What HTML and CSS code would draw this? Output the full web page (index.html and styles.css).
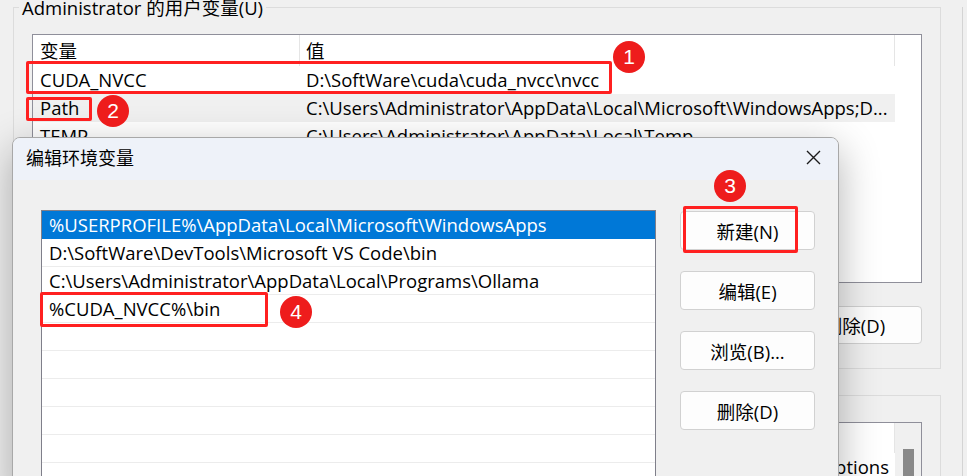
FILE: index.html
```html
<!DOCTYPE html>
<html lang="zh-CN">
<head>
    <meta charset="UTF-8">
    <title>环境变量</title>
    <link rel="stylesheet" href="styles.css">
</head>
<body>
    <div class="screen">
        <!-- background window: 环境变量 -->
        <div class="window">
            <div class="group">
                <div class="group-title">Administrator 的用户变量(U)</div>
                <div class="listview">
                    <div class="lv-header">
                        <div class="col col-name">变量</div>
                        <div class="col col-value">值</div>
                    </div>
                    <div class="lv-row">
                        <div class="col col-name">CUDA_NVCC</div>
                        <div class="col col-value">D:\SoftWare\cuda\cuda_nvcc\nvcc</div>
                    </div>
                    <div class="lv-row is-selected">
                        <div class="col col-name">Path</div>
                        <div class="col col-value">C:\Users\Administrator\AppData\Local\Microsoft\WindowsApps;D...</div>
                    </div>
                    <div class="lv-row">
                        <div class="col col-name">TEMP</div>
                        <div class="col col-value">C:\Users\Administrator\AppData\Local\Temp</div>
                    </div>
                    <div class="lv-row">
                        <div class="col col-name">TMP</div>
                        <div class="col col-value">C:\Users\Administrator\AppData\Local\Temp</div>
                    </div>
                </div>
                <div class="group-buttons">
                    <button class="btn">新建(N)...</button>
                    <button class="btn">编辑(E)...</button>
                    <button class="btn">删除(D)</button>
                </div>
            </div>

            <div class="group group-system">
                <div class="group-title">系统变量(S)</div>
                <div class="listview has-scroll">
                    <div class="lv-main">
                        <div class="lv-header">
                            <div class="col col-name">变量</div>
                            <div class="col col-value">值</div>
                        </div>
                        <div class="lv-row">
                            <div class="col col-name">JAVA_TOOL</div>
                            <div class="col col-value align-end">-Dfile.encoding=UTF-8 Options</div>
                        </div>
                    </div>
                    <div class="lv-scroll">
                        <div class="lv-thumb"></div>
                    </div>
                </div>
            </div>
        </div>

        <!-- dialog: 编辑环境变量 -->
        <div class="dialog">
            <div class="dialog-titlebar">
                <span class="dialog-title">编辑环境变量</span>
                <svg class="dialog-close" width="15" height="15" viewBox="0 0 15 15">
                    <path d="M1 1 L14 14 M14 1 L1 14" stroke="#1b1b1b" stroke-width="1.4" fill="none"/>
                </svg>
            </div>
            <div class="dialog-body">
                <div class="dialog-list">
                    <div class="dialog-row is-selected">%USERPROFILE%\AppData\Local\Microsoft\WindowsApps</div>
                    <div class="dialog-row">D:\SoftWare\DevTools\Microsoft VS Code\bin</div>
                    <div class="dialog-row">C:\Users\Administrator\AppData\Local\Programs\Ollama</div>
                    <div class="dialog-row">%CUDA_NVCC%\bin</div>
                    <div class="dialog-row"></div>
                    <div class="dialog-row"></div>
                    <div class="dialog-row"></div>
                    <div class="dialog-row"></div>
                    <div class="dialog-row"></div>
                    <div class="dialog-row"></div>
                </div>
                <div class="dialog-buttons">
                    <button class="btn">新建(N)</button>
                    <button class="btn">编辑(E)</button>
                    <button class="btn">浏览(B)...</button>
                    <button class="btn">删除(D)</button>
                </div>
            </div>
        </div>

        <!-- annotations -->
        <div class="mark mark-1"></div>
        <div class="mark mark-2"></div>
        <div class="mark mark-3"></div>
        <div class="mark mark-4"></div>
        <div class="badge badge-1">1</div>
        <div class="badge badge-2">2</div>
        <div class="badge badge-3">3</div>
        <div class="badge badge-4">4</div>
    </div>
</body>
</html>
```

FILE: styles.css
```css
/* Base */
* {
    box-sizing: border-box;
}

body {
    margin: 0;
    background-color: #f0f0f0;
    font-family: "Open Sans", "Noto Sans CJK SC", sans-serif;
    font-size: 18.5px;
    color: #000;
    overflow: hidden;
}

.screen {
    position: relative;
    width: 967px;
    height: 476px;
    overflow: hidden;
}

/* Background window */
.window {
    width: 963px;
    height: 476px;
    border-right: 1px solid #d4d4d4;
}

.group {
    margin: 7px 21px 0 13px;
    border: 1px solid #dcdcdc;
    padding: 0 18px 24px 18px;
}

.group-system {
    margin-top: 26px;
}

.group-title {
    width: fit-content;
    margin: -10px 0 0 -13px;
    padding: 0 3px;
    background-color: #f0f0f0;
    line-height: 20px;
    white-space: nowrap;
}

.listview {
    margin-top: 16px;
    height: 249px;
    background-color: #fff;
    border: 1px solid #8f8f9a;
    overflow: hidden;
}

.lv-header {
    display: flex;
    height: 31px;
    line-height: 31px;
}

.lv-header .col {
    border-right: 1px solid #e5e5e5;
}

.lv-row {
    display: flex;
    width: fit-content;
    height: 28px;
    line-height: 28px;
}

.lv-row.is-selected {
    background-color: #f0f0f0;
}

.col {
    white-space: nowrap;
    overflow: hidden;
}

.col-name {
    width: 267px;
    padding-left: 7px;
}

.col-value {
    width: 595px;
    padding-left: 6px;
}

.col-value.align-end {
    text-align: right;
    padding-right: 6px;
}

.listview.has-scroll {
    display: flex;
    height: 200px;
}

.lv-main {
    flex: 1;
}

.has-scroll .lv-header {
    height: 30px;
    line-height: 30px;
}

.lv-scroll {
    width: 27px;
    background-color: #f0f0f0;
    padding: 26px 0 0 8px;
}

.lv-thumb {
    width: 11px;
    height: 120px;
    background-color: #898989;
}

.group-buttons {
    display: flex;
    justify-content: flex-end;
    gap: 18px;
    margin-top: 23px;
}

.group-buttons .btn {
    height: 38px;
}

.btn {
    width: 135px;
    height: 39px;
    padding: 0;
    border: 1px solid #d1d1d1;
    border-radius: 4px;
    background-color: #fdfdfd;
    font-family: inherit;
    font-size: 18.5px;
    color: #000;
}

/* Dialog */
.dialog {
    position: absolute;
    left: 12px;
    top: 137px;
    width: 827px;
    height: 360px;
    border: 1px solid #a8a8a8;
    border-radius: 8px 8px 0 0;
    background-color: #f0f0f0;
    box-shadow: 0 12px 40px rgba(0, 0, 0, 0.3);
    overflow: hidden;
}

.dialog-titlebar {
    display: flex;
    justify-content: space-between;
    align-items: center;
    height: 42px;
    padding: 0 17px 4px 13px;
    background-color: #eef2f9;
}

.dialog-title {
    font-size: 18px;
}

.dialog-body {
    display: flex;
    gap: 24px;
    padding: 30px 0 0 28px;
}

.dialog-list {
    width: 615px;
    height: 320px;
    background-color: #fff;
    border: 1px solid #7f7f8a;
}

.dialog-row {
    height: 28px;
    line-height: 27px;
    padding-left: 7px;
    border-bottom: 1px solid #ececec;
    white-space: nowrap;
    overflow: hidden;
}

.dialog-row.is-selected {
    background-color: #0078d7;
    border-bottom-color: #0078d7;
    color: #fff;
}

.dialog-buttons {
    display: flex;
    flex-direction: column;
    gap: 21px;
    padding-top: 1px;
}

/* Red annotations */
.mark {
    position: absolute;
    border: 3px solid #ff2020;
    border-radius: 2px;
}

.mark-1 { left: 26px; top: 61px; width: 586px; height: 33px; }
.mark-2 { left: 26px; top: 97px; width: 66px; height: 24px; }
.mark-3 { left: 683px; top: 206px; width: 115px; height: 47px; }
.mark-4 { left: 40px; top: 292px; width: 228px; height: 35px; }

.badge {
    position: absolute;
    width: 32px;
    height: 32px;
    border-radius: 50%;
    background-color: #ee1c1c;
    color: #fff;
    font-family: "Liberation Sans", Arial, sans-serif;
    font-size: 21px;
    line-height: 32px;
    text-align: center;
}

.badge-1 { left: 613px; top: 41px; }
.badge-2 { left: 97px; top: 95px; }
.badge-3 { left: 714px; top: 170px; }
.badge-4 { left: 280px; top: 296px; }
```
